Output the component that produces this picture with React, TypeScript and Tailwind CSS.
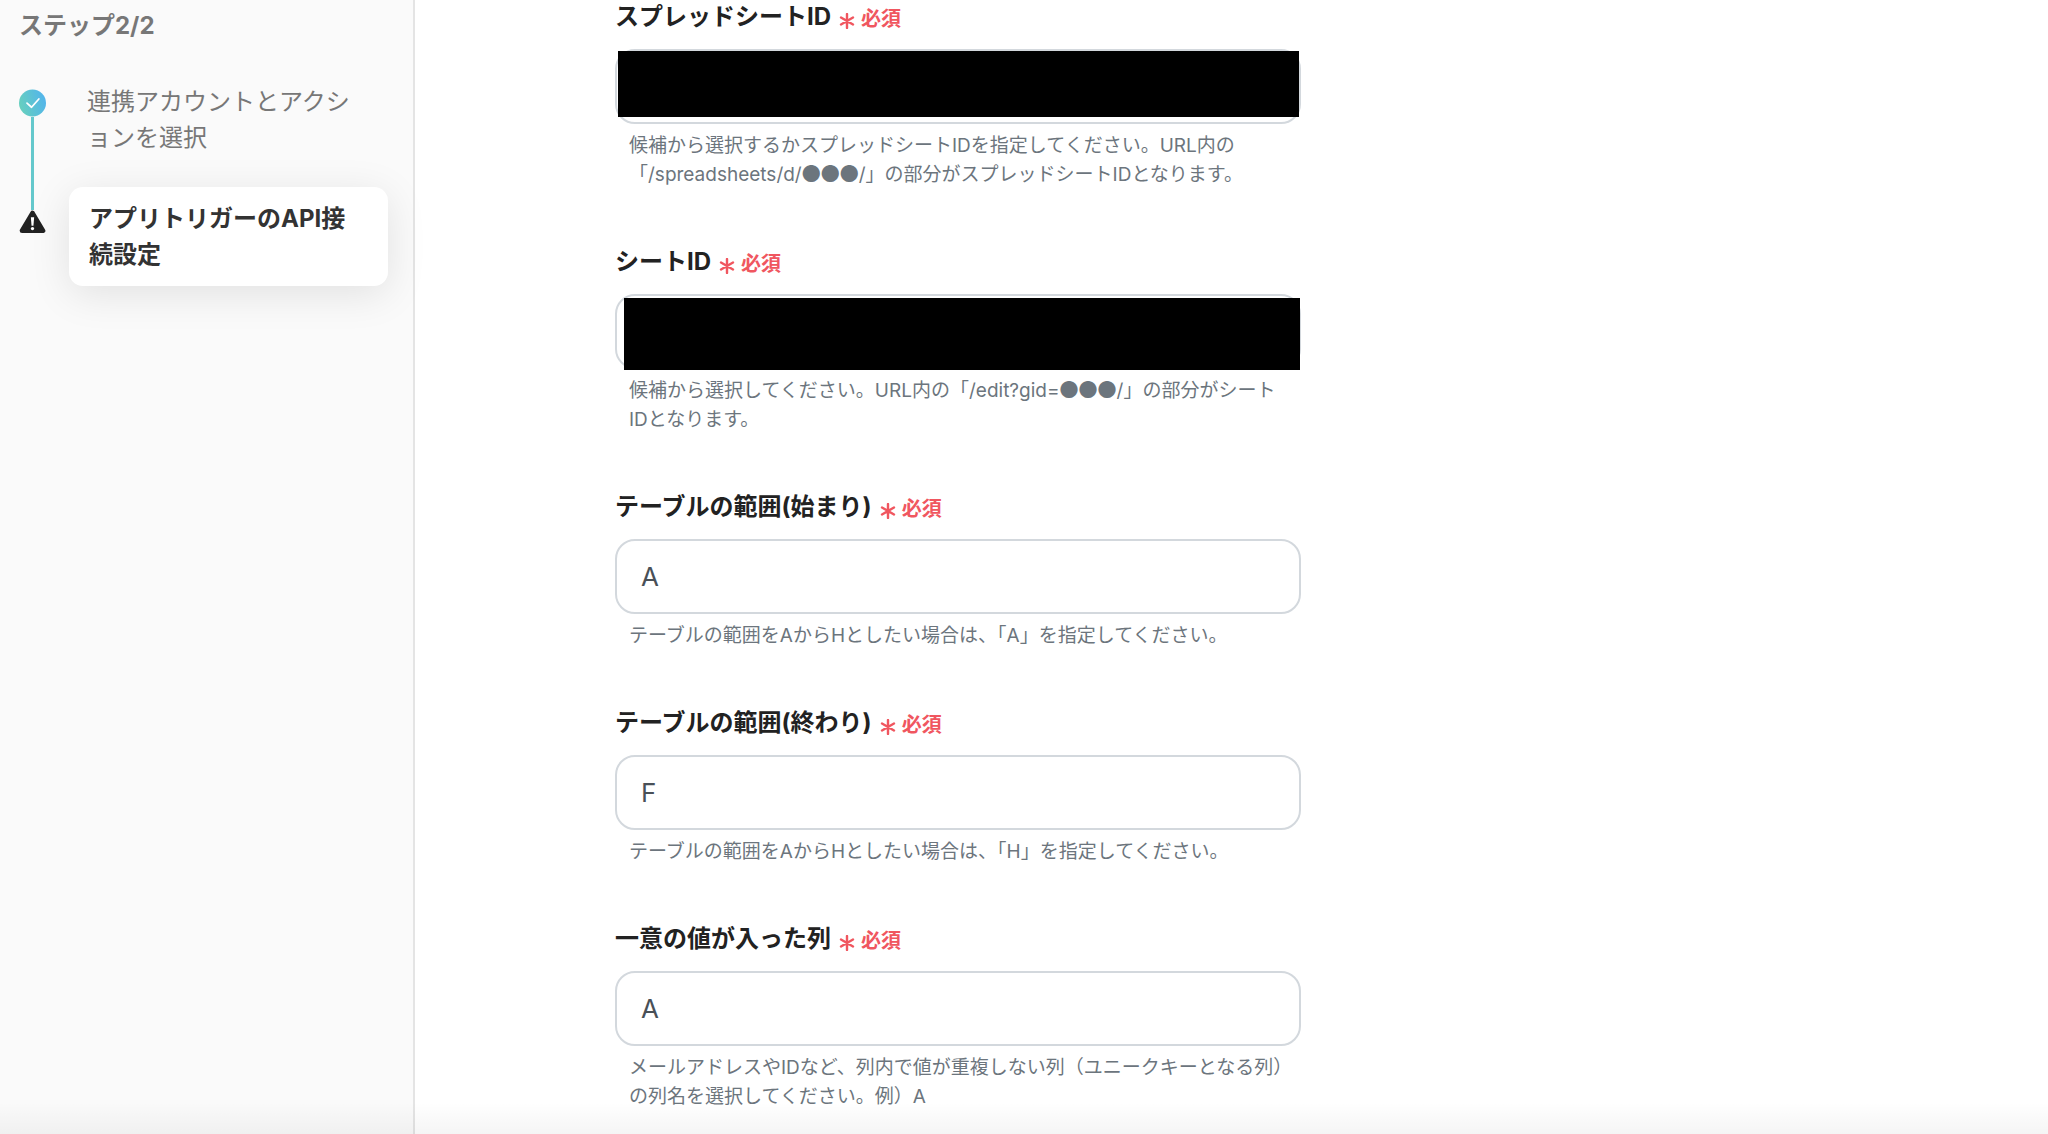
import { useState } from 'react'

interface Field {
    id: string
    label: string
    help: string[]
    value: string
    mask?: string
}

const FIELDS: Field[] = [
    {
        id: 'spreadsheet-id',
        label: 'スプレッドシートID',
        help: [
            '候補から選択するかスプレッドシートIDを指定してください。URL内の',
            '「/spreadsheets/d/●●●/」の部分がスプレッドシートIDとなります。',
        ],
        value: '',
        mask: 'left-[3px] right-[2px] top-[2px] h-[66px]',
    },
    {
        id: 'sheet-id',
        label: 'シートID',
        help: ['候補から選択してください。URL内の「/edit?gid=●●●/」の部分がシート', 'IDとなります。'],
        value: '',
        mask: 'left-[9px] right-[1px] top-1 h-[72px]',
    },
    {
        id: 'range-start',
        label: 'テーブルの範囲(始まり)',
        help: ['テーブルの範囲をAからHとしたい場合は、「A」を指定してください。'],
        value: 'A',
    },
    {
        id: 'range-end',
        label: 'テーブルの範囲(終わり)',
        help: ['テーブルの範囲をAからHとしたい場合は、「H」を指定してください。'],
        value: 'F',
    },
    {
        id: 'unique-column',
        label: '一意の値が入った列',
        help: ['メールアドレスやIDなど、列内で値が重複しない列（ユニークキーとなる列）', 'の列名を選択してください。例）A'],
        value: 'A',
    },
]

function DoneIcon() {
    return (
        <svg viewBox="0 0 28 28" className="block w-[27px] h-7 shrink-0" aria-hidden="true">
            <defs>
                <linearGradient id="done" x1="0" y1="0.65" x2="1" y2="0.35">
                    <stop offset="0" stopColor="#67d0bd" />
                    <stop offset="1" stopColor="#52b4ec" />
                </linearGradient>
            </defs>
            <circle cx="14" cy="14" r="14" fill="url(#done)" />
            <path d="M8.3 14.2 L13 18.4 L20.6 9.8" fill="none" stroke="#fff" strokeWidth="1.8" strokeLinecap="round" strokeLinejoin="round" />
        </svg>
    )
}

function WarningIcon() {
    return (
        <svg viewBox="0 0 28 24" className="block w-[27px] h-6 shrink-0" aria-hidden="true">
            <path d="M14 2.8 L24.8 21 H3.2 Z" fill="#222" stroke="#222" strokeWidth="5" strokeLinejoin="round" />
            <path d="M12.3 7.2 h3.4 l-0.7 8.8 h-2 Z" fill="#fff" />
            <circle cx="14" cy="18.8" r="1.7" fill="#fff" />
        </svg>
    )
}

// Inter has a narrow ●, so the circles are set in the full-width font
function HelpLine({ text }: { text: string }) {
    return (
        <span className="block h-[29px] whitespace-nowrap">
            {text.split(/(●+)/).map((part, i) =>
                part.startsWith('●') ? (
                    <span key={i} className="font-['Noto_Sans_CJK_JP',sans-serif] leading-none">{part}</span>
                ) : (
                    part
                )
            )}
        </span>
    )
}

function FormField({ field }: { field: Field }) {
    const [value, setValue] = useState(field.value)

    return (
        <div>
            <label htmlFor={field.id} className="flex items-center h-[34px] mb-[15px] text-2xl leading-[34px] font-bold text-[#222] whitespace-nowrap">
                {field.label}
                <span className="ml-2 pt-1 flex items-center gap-1.5 text-[20px] leading-[30px] text-[#f0565f]">
                    <svg viewBox="0 0 16 16" className="w-4 h-4 mt-[3px]" aria-hidden="true">
                        <path d="M8 1 V15 M2 4.5 L14 11.5 M14 4.5 L2 11.5" stroke="currentColor" strokeWidth="2.4" strokeLinecap="round" fill="none" />
                    </svg>
                    必須
                </span>
            </label>
            <div className="relative">
                <input
                    id={field.id}
                    type="text"
                    value={value}
                    onChange={(e) => setValue(e.target.value)}
                    aria-describedby={`${field.id}-help`}
                    className="block w-full h-[75px] px-6 rounded-[20px] border-2 border-[#d3d8dd] bg-white text-[26px] text-[#495057] outline-none"
                />
                {field.mask && <div className={`absolute bg-black ${field.mask}`} />}
            </div>
            <p id={`${field.id}-help`} className="mt-[7px] pl-[14px] text-[19px] leading-[29px] text-[#6c757d]">
                {field.help.map((line) => (
                    <HelpLine key={line} text={line} />
                ))}
            </p>
        </div>
    )
}

export default function App() {
    return (
        <div className="relative flex h-screen overflow-hidden bg-white font-['Inter','Noto_Sans_CJK_JP',sans-serif]" lang="ja">
            <aside className="w-[415px] shrink-0 bg-[#fafafa] border-r-2 border-[#e4e4e4] pl-[19px] pr-[25px] pt-2">
                <h2 className="text-2xl leading-9 font-bold text-[#777]">ステップ2/2</h2>
                <ol className="mt-10 text-2xl leading-9">
                    <li className="flex">
                        <div className="flex flex-col items-center pt-[5px]">
                            <DoneIcon />
                            <div className="w-[3px] flex-1 bg-[#64c8cc]" />
                        </div>
                        <p className="flex-1 pl-[41px] pr-5 pb-[31px] text-[#777]">連携アカウントとアクションを選択</p>
                    </li>
                    <li className="flex" aria-current="step">
                        <div className="flex flex-col items-center">
                            <div className="w-[3px] h-[23px] bg-[#64c8cc]" />
                            <WarningIcon />
                        </div>
                        <p className="flex-1 ml-[23px] px-5 pt-[14px] pb-[13px] rounded-[14px] bg-white font-bold text-[#333] shadow-[0_8px_40px_rgba(0,0,0,0.1)]">
                            アプリトリガーのAPI接続設定
                        </p>
                    </li>
                </ol>
            </aside>

            <main className="flex-1 overflow-hidden pl-[200px]">
                <form className="flex flex-col gap-14 max-w-[686px]">
                    {FIELDS.map((field) => (
                        <FormField key={field.id} field={field} />
                    ))}
                </form>
            </main>

            {/* Soft shade above the page bottom */}
            <div className="absolute inset-x-0 bottom-0 h-8 bg-linear-to-b from-transparent to-black/4 pointer-events-none" />
        </div>
    )
}
